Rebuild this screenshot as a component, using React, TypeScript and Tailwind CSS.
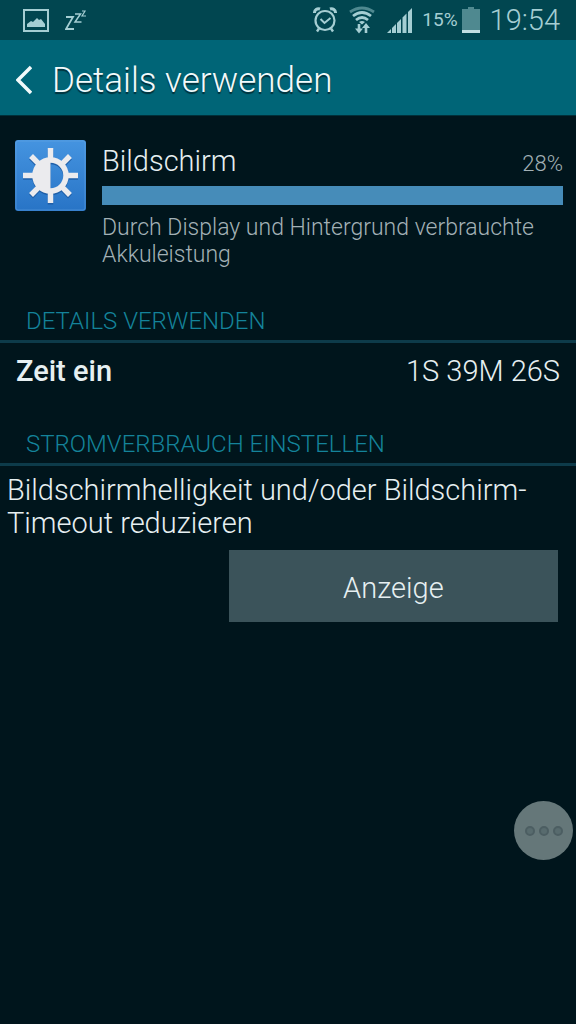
import type { ReactNode } from 'react';

const usage = { label: 'Bildschirm', percent: 28, description: 'Durch Display und Hintergrund verbrauchte Akkuleistung' };

function PictureIcon() {
  return (
    <svg width="26" height="23" viewBox="0 0 26 23" fill="none" aria-hidden="true">
      <rect x="1" y="1" width="24" height="21" stroke="#a5ced3" strokeWidth="2" />
      <path d="M4 18v-3l4-3 2 1 4-4 2 2 2-1 4 5v3z" fill="#a5ced3" />
    </svg>
  );
}

function SnoozeIcon() {
  return (
    <svg width="22" height="20" viewBox="0 0 22 20" fill="none" stroke="#a5ced3" aria-hidden="true">
      <path d="M1 7h7L1 19h8" strokeWidth="1.8" />
      <path d="M10 4h5.500l-5.500 8h6.500" strokeWidth="1.500" />
      <path d="M17 1h3l-3 5h4" strokeWidth="1.200" />
    </svg>
  );
}

function AlarmIcon() {
  return (
    <svg width="24" height="26" viewBox="0 0 24 26" fill="none" stroke="#a5ced3" aria-hidden="true">
      <circle cx="12" cy="13.500" r="9.500" strokeWidth="2.200" />
      <path d="M7.500 12l4 4 6-5" strokeWidth="2" />
      <path d="M1.500 6a4 4 0 0 1 5.500-4M22.500 6a4 4 0 0 0-5.500-4" strokeWidth="3" />
      <path d="M6 21.500l-2 3M18 21.500l2 3" strokeWidth="2.400" />
    </svg>
  );
}

function WifiIcon() {
  return (
    <svg width="26" height="28" viewBox="0 0 26 28" fill="none" stroke="#a5ced3" aria-hidden="true">
      <path d="M1 6Q13-2 25 6" strokeWidth="2.800" stroke="#4f8990" />
      <path d="M4 10Q13 3 22 10" strokeWidth="2.800" />
      <path d="M7 14Q13 9 19 14" strokeWidth="2.800" />
      <path d="M10 16q3-2 6 0l-3 2.500z" fill="#a5ced3" stroke="none" />
      <path d="M10 18v6M17 27v-7" strokeWidth="2.600" />
      <path d="M6 22.500h8l-4 5zM13 22h8l-4-5z" fill="#a5ced3" stroke="none" />
    </svg>
  );
}

function SignalIcon() {
  return (
    <svg width="25" height="25" viewBox="0 0 25 25" fill="#a5ced3" aria-hidden="true">
      <path d="M0 25l4-4v4zM5 25v-5l4-4v9zM10 25V15l4-4v14zM15.500 25V9.500l4-4V25zM21 25V4l4-4v25z" />
    </svg>
  );
}

function BatteryIcon() {
  return (
    <svg width="18" height="26" viewBox="0 0 18 26" aria-hidden="true">
      <path d="M0 2h6V0h6v2h6v24H0z" fill="#4f8990" />
      <path d="M0 23h18v3H0z" fill="#c3dfe2" />
    </svg>
  );
}

function BrightnessIcon() {
  const rays = [0, 45, 90, 135, 180, 225, 270, 315];
  return (
    <svg className="shrink-0" width="71" height="71" viewBox="0 0 71 71" aria-hidden="true">
      <defs>
        <linearGradient id="tile" x1="0" y1="0" x2="0" y2="1">
          <stop offset="0" stopColor="#4594e0" />
          <stop offset="1" stopColor="#2874c6" />
        </linearGradient>
      </defs>
      <rect width="71" height="71" rx="3" fill="url(#tile)" />
      <rect x="1" y="1" width="69" height="69" rx="2" fill="none" stroke="#69a9e6" strokeOpacity="0.5" />
      {[{ color: '#1f5fa8', dy: 1.5 }, { color: '#ebebee', dy: 0 }].map((layer) => (
        <g key={layer.color} transform={`translate(0 ${layer.dy})`} stroke={layer.color}>
          {rays.map((angle) => (
            <path key={angle} d="M35.500 19V8" strokeWidth="5.500" transform={`rotate(${angle} 35.500 35.500)`} />
          ))}
          <circle cx="35.500" cy="35.500" r="15.500" fill="none" strokeWidth="5.500" />
          <path d="M35.500 19a16.500 16.500 0 0 0 0 33z" fill={layer.color} stroke="none" />
        </g>
      ))}
    </svg>
  );
}

function SectionTitle({ children }: { children: ReactNode }) {
  return (
    <h2 className="border-b-3 border-[#0d3b4a] px-[26px] pb-0.5 text-[24px] leading-[34px] text-[#14839a]">{children}</h2>
  );
}

export default function App() {
  return (
    <div className="relative flex min-h-screen flex-col bg-[#00151c] font-['Roboto',sans-serif] font-light text-[#e6eff1]">
      <div className="flex h-10 items-center bg-[#014650] pr-4 pl-[23px] text-[#a5ced3]">
        <PictureIcon />
        <div className="ml-4"><SnoozeIcon /></div>
        <div className="ml-auto flex items-center">
          <AlarmIcon />
          <div className="ml-3"><WifiIcon /></div>
          <div className="ml-3"><SignalIcon /></div>
          <span className="ml-2.5 text-[19px] leading-6 font-normal">15%</span>
          <div className="ml-1"><BatteryIcon /></div>
          <span className="ml-2.5 text-[29px] leading-10">19:54</span>
        </div>
      </div>

      <header className="flex h-19 items-center border-b border-[#00303a] bg-[#006577] pt-1 pl-4">
        <button type="button" aria-label="Zurück" className="pr-5">
          <svg width="16" height="30" viewBox="0 0 16 30" fill="none" stroke="#f2fafb" strokeWidth="3.500" aria-hidden="true">
            <path d="M15 2L2 15l13 13" />
          </svg>
        </button>
        <h1 className="pt-0.5 text-[35px] leading-10 text-[#f2fafb] text-shadow-[0_2px_1px_#00303a]">Details verwenden</h1>
      </header>

      <main className="flex flex-col">
        <section className="flex gap-4 pt-6 pr-[13px] pl-[15px]">
          <BrightnessIcon />
          <div className="min-w-0 flex-1">
            <div className="flex h-[46px] items-baseline justify-between pt-[5px]">
              <span className="text-[29px] leading-8">{usage.label}</span>
              <span className="text-[22px] leading-8 text-[#a3b1b6]">{usage.percent}%</span>
            </div>
            <div className="h-[19px] bg-[#468cb9]" />
            <p className="pt-[9px] text-[23px] leading-[27px] text-[#a3b1b6]">{usage.description}</p>
          </div>
        </section>

        <section className="pt-9">
          <SectionTitle>DETAILS VERWENDEN</SectionTitle>
          <dl className="flex h-14 items-center justify-between px-4 text-[29px] leading-8">
            <dt className="font-medium">Zeit ein</dt>
            <dd>1S 39M 26S</dd>
          </dl>
        </section>

        <section className="pt-7">
          <SectionTitle>STROMVERBRAUCH EINSTELLEN</SectionTitle>
          <p className="px-[7px] pt-2 text-[29px] leading-[33px]">Bildschirmhelligkeit und/oder Bildschirm-Timeout reduzieren</p>
          <div className="flex justify-end pt-2.5 pr-[18px]">
            <button type="button" className="h-18 w-[59%] bg-[#3b535a] pt-1 text-[29px] leading-8">Anzeige</button>
          </div>
        </section>
      </main>

      <button type="button" aria-label="Mehr" className="absolute right-[3px] bottom-[164px] flex size-[59px] items-center justify-center gap-1 rounded-full bg-[#657779]">
        <span className="size-2.5 rounded-full border-2 border-[#4c5e62] bg-[#586b6e]" />
        <span className="size-2.5 rounded-full border-2 border-[#4c5e62] bg-[#586b6e]" />
        <span className="size-2.5 rounded-full border-2 border-[#4c5e62] bg-[#586b6e]" />
      </button>
    </div>
  );
}
